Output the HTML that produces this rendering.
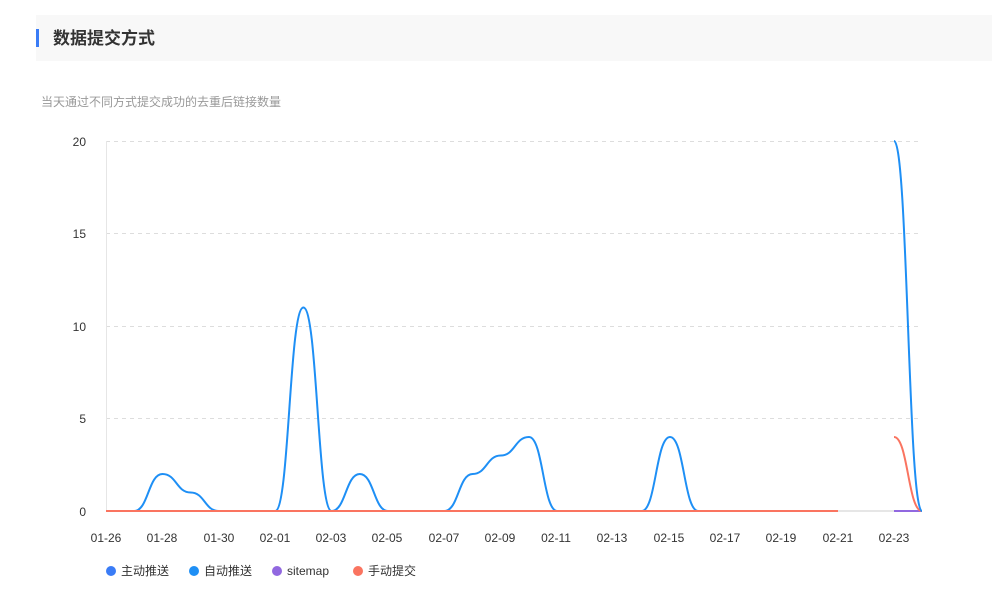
<!DOCTYPE html>
<html><head><meta charset="utf-8"><style>
body{margin:0;width:992px;height:601px;background:#fff;font-family:"Liberation Sans","Noto Sans CJK SC",sans-serif;position:relative;overflow:hidden}
.hd{position:absolute;left:36px;top:15px;width:956px;height:46px;background:#f8f8f8}
.bar{position:absolute;left:36px;top:29px;width:3px;height:18px;background:#3a7cf6}
.tt{position:absolute;left:53px;top:28px;font-size:17px;font-weight:bold;color:#333;line-height:22px}
.sub{position:absolute;left:41px;top:94px;font-size:12px;color:#999;line-height:16px}
</style></head><body>
<div class="hd"></div><div class="bar"></div>
<div class="tt">数据提交方式</div>
<div class="sub">当天通过不同方式提交成功的去重后链接数量</div>
<svg width="992" height="601" style="position:absolute;left:0;top:0" font-family="Liberation Sans, Noto Sans CJK SC, sans-serif">
<g stroke="#ddd" stroke-dasharray="4,4" stroke-width="1">
<line x1="106" y1="141.5" x2="918" y2="141.5"/><line x1="106" y1="233.5" x2="918" y2="233.5"/>
<line x1="106" y1="326.5" x2="918" y2="326.5"/><line x1="106" y1="418.5" x2="918" y2="418.5"/>
</g>
<line x1="106.5" y1="141" x2="106.5" y2="511" stroke="#e6e6e6"/>
<line x1="106" y1="511" x2="922" y2="511" stroke="#ddd" stroke-width="1.5"/>
<g font-size="12" fill="#333" text-anchor="end">
<text x="86" y="146">20</text><text x="86" y="238">15</text><text x="86" y="331">10</text><text x="86" y="423">5</text><text x="86" y="516">0</text>
</g>
<g font-size="12" fill="#333" text-anchor="middle">
<text x="106" y="542">01-26</text><text x="162" y="542">01-28</text><text x="219" y="542">01-30</text><text x="275" y="542">02-01</text><text x="331" y="542">02-03</text><text x="387" y="542">02-05</text><text x="444" y="542">02-07</text><text x="500" y="542">02-09</text><text x="556" y="542">02-11</text><text x="612" y="542">02-13</text><text x="669" y="542">02-15</text><text x="725" y="542">02-17</text><text x="781" y="542">02-19</text><text x="838" y="542">02-21</text><text x="894" y="542">02-23</text>
</g>
<g fill="none" stroke-width="2">
<path stroke="#1e8ff5" d="M106,511 L134.2,511 C148.3,511 148.3,474 162.4,474 C176.5,474 176.5,492.5 190.6,492.5 C204.7,492.5 204.7,511 218.8,511 L275.2,511 C289.3,511 289.3,307.5 303.4,307.5 C317.5,307.5 317.5,511 331.6,511 C345.7,511 345.7,474 359.8,474 C373.9,474 373.9,511 388,511 L444.4,511 C458.5,511 458.5,474 472.6,474 C486.7,474 486.7,455.5 500.8,455.5 C514.9,455.5 514.9,437 529,437 C543.1,437 543.1,511 557.2,511 L641.8,511 C655.9,511 655.9,437 670,437 C684.1,437 684.1,511 698.2,511 L838,511"/>
<path stroke="#fa7460" d="M106,511 L838,511"/>
<path stroke="#9168e0" d="M894,511 L922,511"/>
<path stroke="#fa7460" d="M894,437 C908,437 908,511 922,511"/>
<path stroke="#1e8ff5" d="M894,141 C908,141 908,511 922,511"/>
</g>
<g font-size="12" fill="#333">
<circle cx="111" cy="571" r="5" fill="#3a7cf6"/><text x="121" y="575">主动推送</text>
<circle cx="194" cy="571" r="5" fill="#1e8ff5"/><text x="204" y="575">自动推送</text>
<circle cx="277" cy="571" r="5" fill="#9168e0"/><text x="287" y="575">sitemap</text>
<circle cx="358" cy="571" r="5" fill="#fa7460"/><text x="368" y="575">手动提交</text>
</g>
</svg>
</body></html>
